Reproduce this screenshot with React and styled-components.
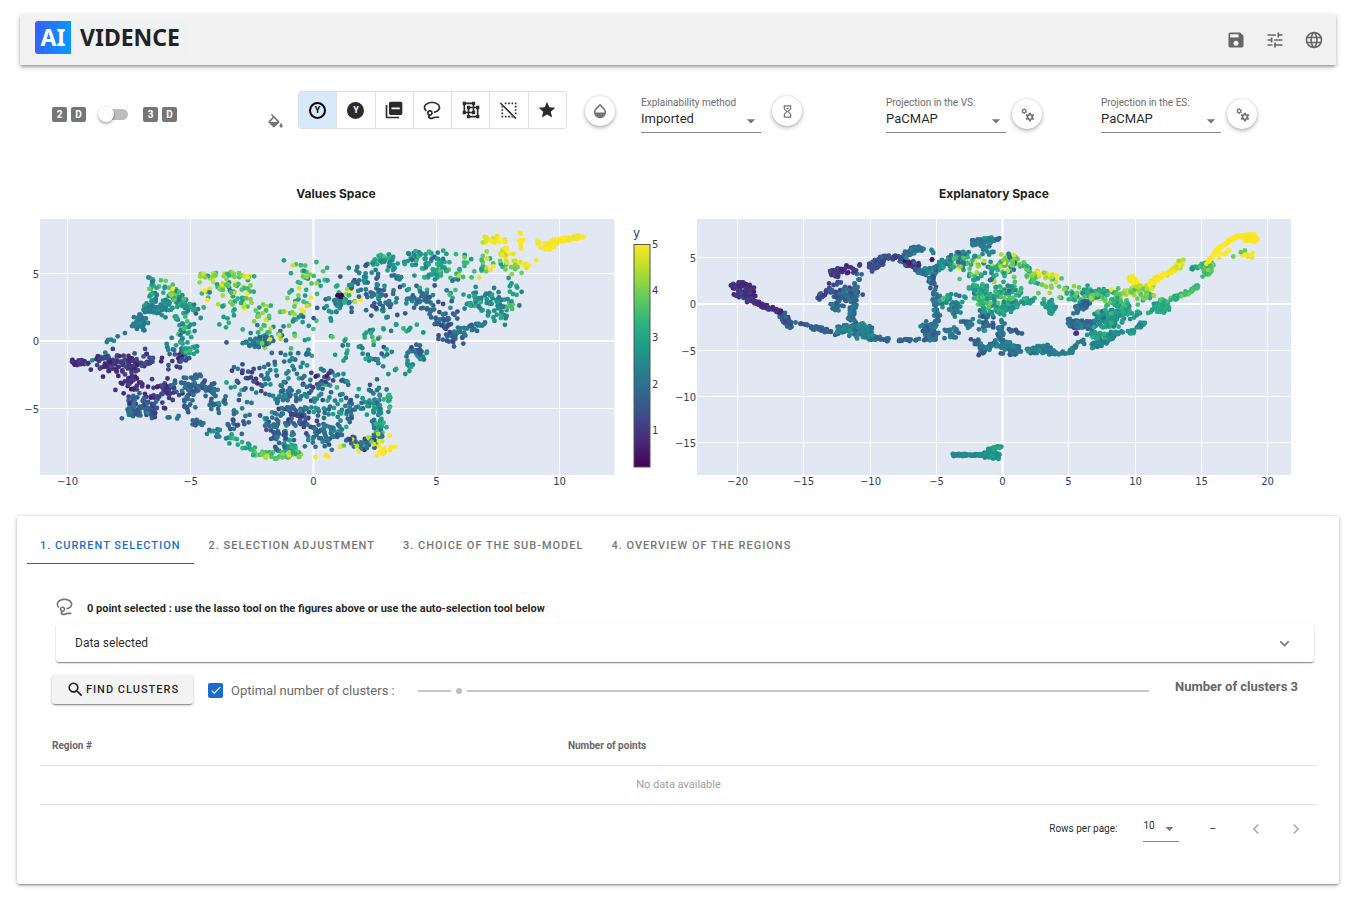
import React from "react";
import styled, { createGlobalStyle } from "styled-components";

const GlobalStyle = createGlobalStyle`
  *, *::before, *::after { box-sizing: border-box; }
  body {
    margin: 0;
    background: #fff;
    color: rgba(0, 0, 0, 0.87);
    font-family: Roboto, "Liberation Sans", sans-serif;
    font-size: 13px;
  }
  button, select, input { font: inherit; color: inherit; margin: 0; }
`;

/* ---------- icons ---------- */

const PATHS = {
  save: "M15,9H5V5H15M12,19A3,3 0 0,1 9,16A3,3 0 0,1 12,13A3,3 0 0,1 15,16A3,3 0 0,1 12,19M17,3H5C3.89,3 3,3.9 3,5V19A2,2 0 0,0 5,21H19A2,2 0 0,0 21,19V7L17,3Z",
  tune: "M3,17V19H9V17H3M3,5V7H13V5H3M13,21V19H21V17H13V15H11V21H13M7,9V11H3V13H7V15H9V9H7M21,13V11H11V13H21M15,9H17V7H21V5H17V3H15V9Z",
  web: "M16.36,14C16.44,13.34 16.5,12.68 16.5,12C16.5,11.32 16.44,10.66 16.36,10H19.74C19.9,10.64 20,11.31 20,12C20,12.69 19.9,13.36 19.74,14M14.59,19.56C15.19,18.45 15.65,17.25 15.97,16H18.92C17.96,17.65 16.43,18.93 14.59,19.56M14.34,14H9.66C9.56,13.34 9.5,12.68 9.5,12C9.5,11.32 9.56,10.65 9.66,10H14.34C14.43,10.65 14.5,11.32 14.5,12C14.5,12.68 14.43,13.34 14.34,14M12,19.96C11.17,18.76 10.5,17.43 10.09,16H13.91C13.5,17.43 12.83,18.76 12,19.96M8,8H5.08C6.03,6.34 7.57,5.06 9.4,4.44C8.8,5.55 8.35,6.75 8,8M5.08,16H8C8.35,17.25 8.8,18.45 9.4,19.56C7.57,18.93 6.03,17.65 5.08,16M4.26,14C4.1,13.36 4,12.69 4,12C4,11.31 4.1,10.64 4.26,10H7.64C7.56,10.66 7.5,11.32 7.5,12C7.5,12.68 7.56,13.34 7.64,14M12,4.03C12.83,5.23 13.5,6.57 13.91,8H10.09C10.5,6.57 11.17,5.23 12,4.03M18.92,8H15.97C15.65,6.75 15.19,5.55 14.59,4.44C16.43,5.07 17.96,6.34 18.92,8M12,2C6.47,2 2,6.5 2,12A10,10 0 0,0 12,22A10,10 0 0,0 22,12A10,10 0 0,0 12,2Z",
  fill: "M19,11.5C19,11.5 17,13.67 17,15A2,2 0 0,0 19,17A2,2 0 0,0 21,15C21,13.67 19,11.5 19,11.5M5.21,10L10,5.21L14.79,10M16.56,8.94L7.62,0L6.21,1.41L8.59,3.79L3.44,8.94C2.85,9.5 2.85,10.47 3.44,11.06L8.94,16.56C9.23,16.85 9.62,17 10,17C10.38,17 10.77,16.85 11.06,16.56L16.56,11.06C17.15,10.47 17.15,9.5 16.56,8.94Z",
  minusBoxes: "M4,6H2V20A2,2 0 0,0 4,22H18V20H4V6M20,2H8A2,2 0 0,0 6,4V16A2,2 0 0,0 8,18H20A2,2 0 0,0 22,16V4A2,2 0 0,0 20,2M19,11H9V9H19V11Z",
  lasso: "M12,2C17.5,2 22,5.13 22,9C22,12.26 18.81,15 14.5,15.78V15.5C14.5,14.91 14.4,14.34 14.21,13.81C17.55,13.21 20,11.28 20,9C20,6.24 16.42,4 12,4C7.58,4 4,6.24 4,9C4,10.19 4.67,11.29 5.79,12.15C5.35,12.64 5,13.21 4.78,13.85C3.06,12.59 2,10.88 2,9C2,5.13 6.5,2 12,2M9.5,12C11.43,12 13,13.57 13,15.5C13,17.4 11.5,18.95 9.6,19C9.39,19.36 9.18,20 9.83,20.68C11,21.88 13.28,19.72 16.39,19.71C18.43,19.7 20.03,19.74 20.03,19.74C20.03,19.74 21.08,19.85 20.97,20.84C20.86,21.82 19.91,21.71 19.91,21.71C19.53,21.71 18.03,21.58 16.22,21.71C14.41,21.85 13.61,22.92 12,23C10.4,23 7.9,22.9 7.22,21C6.77,19.6 7.4,18.4 7.4,18.3C6.54,17.7 6,16.66 6,15.5C6,13.57 7.57,12 9.5,12M9.5,14A1.5,1.5 0 0,0 8,15.5A1.5,1.5 0 0,0 9.5,17A1.5,1.5 0 0,0 11,15.5A1.5,1.5 0 0,0 9.5,14Z",
  overlap: "M2,2H6V3H13V2H17V6H16V8H18V7H22V11H21V18H22V22H18V21H11V22H7V18H8V16H6V17H2V13H3V6H2V2M13,5H6V6H5V13H6V14H8V11H7V7H11V8H14V6H13V5M11,10V11H10V14H13V13H14V10H11M16,10V13H17V17H13V16H10V18H11V19H18V18H19V11H18V10H16Z",
  selectOff: "M1,4.27L2.28,3L21,21.72L19.73,23L1,4.27M20,3A1,1 0 0,1 21,4V5H19V3H20M15,5V3H17V5H15M11,5V3H13V5H11M7,5V3H9V5H7M11,21V19H13V21H11M7,21V19H9V21H7M15,21V19H17V21H15M4,21A1,1 0 0,1 3,20V19H5V21H4M3,15H5V17H3V15M21,15V17H19V15H21M3,11H5V13H3V11M3,7H5V9H3V7M21,11V13H19V11H21M21,7V9H19V7H21Z",
  star: "M12,17.27L18.18,21L16.54,13.97L22,9.24L14.81,8.62L12,2L9.19,8.62L2,9.24L7.45,13.97L5.82,21L12,17.27Z",
  opacity: "M17.66,8L12,2.35L6.34,8C4.78,9.56 4,11.64 4,13.64C4,15.64 4.78,17.75 6.34,19.31C7.9,20.87 9.95,21.66 12,21.66C14.05,21.66 16.1,20.87 17.66,19.31C19.22,17.75 20,15.64 20,13.64C20,11.64 19.22,9.56 17.66,8M6,14C6,12 6.62,10.73 7.76,9.6L12,5.27L16.24,9.65C17.38,10.77 18,12 18,14H6Z",
  timer: "M6,2H18V8L14,12L18,16V22H6V16L10,12L6,8V2M16,16.5L12,12.5L8,16.5V20H16V16.5M12,11.5L16,7.5V4H8V7.5L12,11.5M10,6H14V6.75L12,8.75L10,6.75V6Z",
  cogs: "M15.9,18.45C17.25,18.45 18.35,17.35 18.35,16C18.35,14.65 17.25,13.55 15.9,13.55C14.54,13.55 13.45,14.65 13.45,16C13.45,17.35 14.54,18.45 15.9,18.45M21.1,16.68L22.58,17.84C22.71,17.95 22.75,18.13 22.66,18.29L21.26,20.71C21.17,20.86 21,20.92 20.83,20.86L19.09,20.16C18.73,20.44 18.33,20.67 17.91,20.85L17.64,22.7C17.62,22.87 17.47,23 17.3,23H14.5C14.32,23 14.18,22.87 14.15,22.7L13.89,20.85C13.46,20.67 13.07,20.44 12.71,20.16L10.96,20.86C10.81,20.92 10.62,20.86 10.54,20.71L9.14,18.29C9.05,18.13 9.09,17.95 9.22,17.84L10.7,16.68L10.65,16L10.7,15.31L9.22,14.16C9.09,14.05 9.05,13.86 9.14,13.71L10.54,11.29C10.62,11.13 10.81,11.07 10.96,11.13L12.71,11.84C13.07,11.56 13.46,11.32 13.89,11.15L14.15,9.29C14.18,9.13 14.32,9 14.5,9H17.3C17.47,9 17.62,9.13 17.64,9.29L17.91,11.15C18.33,11.32 18.73,11.56 19.09,11.84L20.83,11.13C21,11.07 21.17,11.13 21.26,11.29L22.66,13.71C22.75,13.86 22.71,14.05 22.58,14.16L21.1,15.31L21.15,16L21.1,16.68M6.69,8.07C7.56,8.07 8.26,7.37 8.26,6.5C8.26,5.63 7.56,4.92 6.69,4.92C5.82,4.92 5.12,5.63 5.12,6.5C5.12,7.37 5.82,8.07 6.69,8.07M10.03,6.94L11,7.68C11.07,7.75 11.09,7.87 11.03,7.97L10.13,9.53C10.08,9.63 9.96,9.67 9.86,9.63L8.74,9.18L8,9.62L7.81,10.81C7.79,10.92 7.7,11 7.59,11H5.79C5.67,11 5.58,10.92 5.56,10.81L5.4,9.62L4.64,9.18L3.52,9.63C3.41,9.67 3.3,9.63 3.24,9.53L2.34,7.97C2.28,7.87 2.31,7.75 2.39,7.68L3.34,6.94L3.31,6.5L3.34,6.06L2.39,5.32C2.31,5.25 2.28,5.13 2.34,5.03L3.24,3.47C3.3,3.37 3.41,3.33 3.52,3.37L4.63,3.82L5.4,3.38L5.56,2.19C5.58,2.08 5.67,2 5.79,2H7.59C7.7,2 7.79,2.08 7.81,2.19L8,3.38L8.74,3.82L9.86,3.37C9.96,3.33 10.08,3.37 10.13,3.47L11.03,5.03C11.09,5.13 11.07,5.25 11,5.32L10.03,6.06L10.06,6.5L10.03,6.94Z",
  magnify: "M9.5,3A6.5,6.5 0 0,1 16,9.5C16,11.11 15.41,12.59 14.44,13.73L14.71,14H15.5L20.5,19L19,20.5L14,15.5V14.71L13.73,14.44C12.59,15.41 11.11,16 9.5,16A6.5,6.5 0 0,1 3,9.5A6.5,6.5 0 0,1 9.5,3M9.5,5C7,5 5,7 5,9.5C5,12 7,14 9.5,14C12,14 14,12 14,9.5C14,7 12,5 9.5,5Z",
  down: "M7.41,8.58L12,13.17L16.59,8.58L18,10L12,16L6,10L7.41,8.58Z",
  left: "M15.41,16.58L10.83,12L15.41,7.41L14,6L8,12L14,18L15.41,16.58Z",
  right: "M8.59,16.58L13.17,12L8.59,7.41L10,6L16,12L10,18L8.59,16.58Z",
  caret: "M7,10L12,15L17,10H7Z",
  check: "M9,17L4,12L5.4,10.6L9,14.2L18.6,4.6L20,6L9,17Z",
};

const Glyph = styled.svg`
  display: block;
  flex: none;
  fill: currentColor;
  fill-rule: evenodd;
`;

const Icon = ({ name, size = 20 }) => (
  <Glyph width={size} height={size} viewBox="0 0 24 24" aria-hidden="true">
    <path d={PATHS[name]} />
  </Glyph>
);

/* ---------- header ---------- */

const Page = styled.div`
  padding: 14px 0 16px;
`;

const Header = styled.header`
  display: flex;
  align-items: center;
  justify-content: space-between;
  height: 51px;
  margin: 0 16px 0 20px;
  padding: 0 12px 0 15px;
  background: #f2f2f2;
  box-shadow: 0 2px 3px -1px rgba(0, 0, 0, 0.35), 0 2px 5px rgba(0, 0, 0, 0.22);
`;

const Logo = styled.div`
  display: flex;
  align-items: center;
  height: 33px;
  margin-bottom: 4px;
  padding-right: 8px;
  background: #f0f1f3;
  font: 700 23px/33px "Noto Sans", "Open Sans", sans-serif;
  color: #222;
`;

const LogoMark = styled.span`
  width: 36px;
  margin-right: 9px;
  border-radius: 3px 0 0 3px;
  background: linear-gradient(100deg, #3a5cff, #0a95ff 85%);
  color: #fff;
  text-align: center;
`;

const HeaderActions = styled.div`
  display: flex;
  gap: 19px;
  color: #666;
`;

const PlainButton = styled.button`
  display: grid;
  place-items: center;
  padding: 0;
  border: 0;
  background: none;
  cursor: pointer;
`;

/* ---------- toolbar ---------- */

const Toolbar = styled.div`
  display: grid;
  grid-template-columns: 216fr 376fr 245fr 215fr 251fr;
  align-items: start;
  height: 105px;
  padding: 26px 0 0 49px;
`;

const DimensionSwitch = styled.label`
  display: flex;
  align-items: center;
  height: 46px;
  padding-left: 3px;
`;

const Tiles = styled.span`
  display: flex;
  gap: 4px;
`;

const Tile = styled.span`
  width: 15px;
  height: 15px;
  border-radius: 2px;
  background: #757575;
  color: #fff;
  font: 700 10px/15px Roboto, sans-serif;
  text-align: center;
`;

const Toggle = styled.input`
  appearance: none;
  display: flex;
  align-items: center;
  width: 30px;
  height: 11px;
  margin: 0 15px 0 12px;
  border-radius: 6px;
  background: linear-gradient(to right, transparent 4px, #bdbdbd 4px);
  cursor: pointer;

  &::before {
    content: "";
    width: 16px;
    height: 16px;
    border-radius: 50%;
    background: #fff;
    box-shadow: 0 2px 3px rgba(0, 0, 0, 0.3), 0 0 2px rgba(0, 0, 0, 0.12);
  }
`;

const ToolGroup = styled.div`
  display: flex;
  align-items: flex-start;
`;

const FillMark = styled.span`
  margin: 23px 13px 0 1px;
  color: #757575;
`;

const ButtonBar = styled.div`
  display: flex;
  width: 269px;
  height: 38px;
  margin-right: 18px;
  border: 1px solid #e0e0e0;
  border-radius: 3px;
  overflow: hidden;
`;

const BarButton = styled.button`
  display: grid;
  place-items: center;
  flex: 1;
  padding: 0;
  border: 0;
  border-left: 1px solid #e0e0e0;
  background: ${(p) => (p.$active ? "#d7e9fa" : "#fff")};
  color: ${(p) => (p.$active ? "#000" : "#2b2b2b")};
  cursor: pointer;

  &:first-child { border-left: 0; }
`;

const Ring = styled.span`
  width: 17px;
  height: 17px;
  border: 2px solid ${(p) => (p.$solid ? "#2b2b2b" : "#000")};
  border-radius: 50%;
  background: ${(p) => (p.$solid ? "#2b2b2b" : "transparent")};
  color: ${(p) => (p.$solid ? "#fff" : "#000")};
  font: 700 9px/13px Roboto, sans-serif;
  text-align: center;
`;

const RoundButton = styled.button`
  display: grid;
  place-items: center;
  width: 30px;
  height: 30px;
  margin-top: ${(p) => (p.$low ? "8px" : "5px")};
  padding: 0;
  border: 0;
  border-radius: 50%;
  background: #fff;
  color: #757575;
  box-shadow: 0 2px 4px rgba(0, 0, 0, 0.28), 0 0 3px rgba(0, 0, 0, 0.12);
  cursor: pointer;
`;

const FieldGroup = styled.div`
  display: flex;
  align-items: flex-start;
  gap: ${(p) => (p.$tight ? "6px" : "11px")};
`;

const Field = styled.label`
  display: block;
  width: 120px;
  padding-top: 6px;
  color: #6b6b6b;
  font-size: 10px;
  line-height: 12px;
`;

const SelectBox = styled.span`
  display: grid;
  grid-template-columns: 1fr auto;
  align-items: center;
  height: ${(p) => (p.$small ? "27px" : "24px")};
  border-bottom: 1px solid #868686;
  color: #757575;
  width: ${(p) => (p.$small ? "36px" : "auto")};

  svg { grid-area: 1 / 2; pointer-events: none; }
`;

const Select = styled.select`
  grid-area: 1 / 1 / 2 / 3;
  appearance: none;
  width: 100%;
  padding: 0 0 4px;
  border: 0;
  background: none;
  color: rgba(0, 0, 0, 0.87);
  font-size: ${(p) => (p.$small ? "10px" : "13px")};
  line-height: 16px;
`;

/* ---------- charts ---------- */

const Charts = styled.section`
  display: grid;
  grid-template-columns: minmax(0, 670fr) minmax(0, 682fr);
`;

const Plot = styled.svg`
  display: block;
  width: 100%;
  height: auto;
`;

const Title = styled.text`
  font: 700 12px Inter, sans-serif;
  fill: #1f1f1f;
  text-anchor: middle;
`;

const Tick = styled.text`
  font: ${(p) => (p.$large ? "12px" : "10px")} "DejaVu Sans", sans-serif;
  fill: #2a3f5f;
  text-anchor: ${(p) => p.$anchor};
`;

const VIRIDIS = [
  [68, 1, 84], [72, 40, 120], [62, 73, 137], [49, 104, 142], [38, 130, 142],
  [31, 158, 137], [53, 183, 121], [109, 205, 89], [180, 222, 44], [253, 231, 37],
];

function viridis(value) {
  const t = Math.min(0.9999, Math.max(0, (value - 0.2) / 4.8)) * 9;
  const i = Math.floor(t);
  const f = t - i;
  const c = VIRIDIS[i].map((a, k) => Math.round(a + (VIRIDIS[i + 1][k] - a) * f));
  return `rgb(${c.join(",")})`;
}

/* Each swarm: count, mean value, value spread, radius, then the x, y pairs of its spine. */
const VALUE_SWARMS = [
  [60, 5, 0.1, 2, 583, 236, 566, 239, 546, 243], [20, 5, 0.1, 4, 555, 243, 546, 251],
  [24, 5, 0.4, 4, 484, 241, 505, 238], [9, 5, 0.1, 3, 520, 236, 523, 247],
  [14, 4.9, 0.3, 5, 502, 250, 512, 254], [10, 4.9, 0.3, 4, 508, 260, 525, 266, 538, 256],
  [4, 5, 0.1, 3, 533, 242, 545, 248], [20, 4, 0.8, 8, 482, 262, 500, 268],
  [10, 3.8, 0.4, 6, 508, 265, 522, 274], [30, 2.8, 0.6, 6, 374, 258, 396, 262],
  [45, 2.7, 0.6, 7, 410, 259, 445, 259], [24, 3.4, 0.7, 12, 450, 265, 475, 270],
  [24, 2.9, 0.5, 6, 425, 272, 445, 274], [22, 2, 0.5, 7, 347, 275, 390, 270],
  [24, 2.1, 0.5, 8, 352, 285, 375, 292, 400, 280], [34, 2.4, 0.6, 8, 328, 306, 350, 300],
  [6, 0.3, 0.2, 3, 337, 295, 342, 295], [5, 4.5, 0.4, 6, 345, 290, 356, 307],
  [32, 1.9, 0.5, 8, 370, 305, 395, 299], [6, 1.9, 0.4, 3, 394, 278, 402, 278],
  [34, 1.7, 0.3, 8, 414, 295, 433, 307], [36, 1.7, 0.4, 8, 434, 322, 458, 320],
  [24, 1.7, 0.3, 5, 430, 342, 462, 336], [20, 2, 0.3, 4, 455, 334, 488, 324],
  [56, 2.5, 0.4, 9, 478, 300, 508, 308], [12, 2.8, 0.4, 6, 464, 304, 478, 300],
  [12, 3.4, 0.5, 5, 500, 317, 512, 306], [8, 3, 0.4, 7, 508, 294, 514, 284],
  [12, 2.6, 0.7, 9, 455, 292, 475, 300], [26, 2, 0.5, 6, 408, 352, 424, 356],
  [10, 3, 0.4, 5, 401, 371, 410, 364], [12, 3, 0.5, 5, 366, 334, 382, 330],
  [12, 2.3, 0.7, 12, 395, 320, 414, 330], [20, 2.2, 0.6, 9, 362, 368, 380, 355, 396, 362],
  [9, 2, 0.4, 6, 372, 385, 382, 392], [54, 2.7, 0.5, 5, 376, 400, 379, 435],
  [22, 2.1, 0.4, 7, 348, 405, 368, 402], [14, 3, 0.5, 2, 384, 400, 390, 396, 390, 428],
  [14, 4, 0.7, 5, 373, 442, 388, 434], [12, 5, 0.2, 4, 376, 454, 392, 448],
  [40, 1.8, 0.6, 5, 330, 432, 345, 438, 360, 444, 374, 444], [8, 4.5, 0.6, 6, 338, 440, 360, 446],
  [60, 2, 0.6, 24, 262, 390, 290, 410, 315, 425], [46, 1.9, 0.3, 7, 278, 392, 292, 404, 296, 414],
  [44, 1.8, 0.3, 7, 268, 425, 285, 440], [26, 1.2, 0.3, 6, 282, 416, 310, 424],
  [36, 2, 0.4, 8, 312, 438, 332, 430], [28, 1.4, 0.5, 8, 308, 386, 336, 378],
  [34, 2.2, 0.5, 10, 305, 400, 330, 395, 345, 408], [20, 1.3, 0.4, 9, 240, 375, 268, 378],
  [24, 2, 0.4, 12, 270, 372, 300, 370], [12, 1.9, 0.3, 3, 192, 422, 206, 425],
  [14, 2.3, 0.4, 4, 206, 430, 236, 438], [15, 3.2, 0.4, 4, 228, 440, 255, 450],
  [55, 3.8, 0.5, 3, 252, 453, 275, 456, 300, 454], [14, 3, 0.4, 5, 286, 447, 300, 442],
  [4, 5, 0.1, 4, 316, 458, 330, 456], [16, 1.7, 0.4, 6, 228, 426, 245, 418],
  [20, 0.8, 0.2, 3, 72, 363, 88, 362], [54, 0.9, 0.3, 6, 98, 366, 114, 359, 140, 362],
  [34, 0.9, 0.2, 6, 105, 370, 140, 367], [30, 0.9, 0.3, 7, 125, 382, 142, 382],
  [18, 1.1, 0.3, 6, 138, 361, 150, 359], [40, 1, 0.3, 7, 148, 394, 170, 388],
  [26, 1.5, 0.4, 6, 128, 398, 150, 408], [28, 1.4, 0.4, 6, 148, 405, 156, 412],
  [34, 1.9, 0.4, 5, 128, 414, 145, 410], [9, 2.6, 0.4, 7, 90, 360, 112, 354],
  [54, 1.7, 0.3, 5, 172, 386, 192, 386, 214, 388], [16, 1.8, 0.3, 5, 184, 396, 189, 410],
  [30, 1.9, 0.3, 5, 208, 388, 212, 398, 220, 404], [8, 1.9, 0.3, 3, 190, 378, 200, 376],
  [20, 1.1, 0.4, 6, 168, 364, 188, 358], [4, 1.9, 0.2, 3, 170, 416, 178, 418],
  [52, 2.4, 0.3, 6, 150, 308, 168, 305], [34, 2.2, 0.2, 5, 134, 323, 143, 323],
  [14, 2.2, 0.2, 4, 142, 317, 150, 308], [18, 3, 0.6, 3, 151, 278, 153, 298],
  [26, 3.6, 0.8, 6, 158, 284, 176, 296], [32, 2.7, 0.5, 7, 170, 300, 190, 312],
  [26, 2.8, 0.6, 6, 182, 318, 186, 345], [12, 2.2, 0.6, 7, 168, 344, 180, 356],
  [14, 2.8, 0.5, 4, 184, 350, 195, 350], [22, 2.6, 0.6, 8, 186, 295, 198, 314],
  [34, 4, 0.8, 3, 202, 276, 225, 275, 250, 275], [44, 3.9, 0.9, 9, 206, 291, 235, 288],
  [20, 3.6, 0.9, 10, 240, 284, 253, 305], [26, 3.8, 0.9, 10, 250, 305, 272, 318],
  [10, 3, 0.7, 14, 208, 312, 226, 315], [26, 3.4, 1.1, 8, 250, 342, 280, 332],
  [32, 2, 0.5, 5, 245, 345, 272, 340], [26, 3.7, 0.8, 13, 286, 280, 320, 274],
  [24, 3.4, 0.9, 14, 284, 305, 322, 302], [16, 2.7, 0.8, 12, 284, 336, 308, 325],
  [10, 3.2, 0.7, 8, 320, 264, 338, 285], [8, 1.9, 0.7, 14, 225, 358, 320, 355],
  [5, 2, 0.4, 6, 104, 342, 126, 336], [14, 2.7, 0.7, 12, 335, 350, 360, 355],
  [22, 2.2, 0.7, 14, 290, 355, 330, 370, 350, 395], [12, 2.4, 0.7, 14, 225, 390, 250, 400],
  [14, 2.6, 0.6, 12, 310, 405, 345, 420], [16, 2.4, 0.7, 14, 400, 290, 450, 290],
];

const EXPLANATION_SWARMS = [
  [45, 0.8, 0.2, 3, 731, 288, 741, 284, 750, 288], [36, 0.8, 0.2, 4, 737, 295, 752, 290],
  [20, 0.8, 0.2, 3, 744, 299, 756, 299], [46, 0.9, 0.2, 2, 752, 300, 766, 307, 781, 312],
  [40, 1.6, 0.2, 4, 782, 315, 792, 327], [10, 1.6, 0.3, 1, 795, 322, 812, 327],
  [28, 1.7, 0.2, 2, 812, 327, 830, 332], [26, 2.3, 0.3, 4, 835, 331, 848, 328],
  [90, 2.2, 0.3, 5, 850, 330, 861, 328, 868, 336], [26, 1.9, 0.2, 2, 865, 337, 889, 340],
  [14, 1.7, 0.2, 1, 898, 340, 912, 340], [8, 1.7, 0.2, 1, 914, 340, 935, 340],
  [26, 0.9, 0.2, 4, 832, 273, 850, 269], [5, 0.9, 0.2, 3, 854, 270, 859, 265],
  [6, 1, 0.3, 4, 832, 285, 842, 276], [16, 1.4, 0.4, 3, 818, 297, 832, 290],
  [60, 1.6, 0.4, 8, 835, 293, 850, 298, 850, 288], [56, 1.9, 0.2, 3, 855, 285, 854, 305, 850, 320],
  [14, 1.8, 0.3, 4, 830, 305, 842, 308], [6, 1.9, 0.3, 3, 856, 282, 860, 273],
  [8, 1.9, 0.3, 3, 852, 320, 855, 326], [48, 1.4, 0.3, 4, 870, 268, 886, 258],
  [32, 1.3, 0.3, 2, 882, 257, 905, 258], [42, 2, 0.3, 3, 903, 257, 911, 251, 922, 248],
  [30, 1.6, 0.5, 4, 902, 260, 922, 270], [10, 0.7, 0.2, 3, 905, 262, 921, 265],
  [20, 2.1, 0.3, 4, 918, 272, 935, 272], [22, 2.5, 0.4, 4, 933, 270, 948, 262],
  [3, 2.4, 0.2, 2, 931, 252, 932, 253], [2, 0.4, 0.1, 1, 931, 259, 932, 260],
  [16, 1.8, 0.4, 3, 931, 276, 934, 292], [60, 2, 0.3, 3, 934, 294, 937, 312, 935, 330, 932, 340],
  [46, 2, 0.3, 5, 928, 325, 932, 338], [54, 2.2, 0.4, 3, 973, 243, 984, 241, 998, 240],
  [12, 2.1, 0.3, 5, 980, 246, 990, 252], [46, 2.5, 0.6, 7, 945, 262, 975, 255],
  [26, 3.6, 0.9, 8, 950, 265, 982, 263], [62, 2.8, 0.7, 12, 968, 280, 992, 300, 996, 262],
  [40, 3.2, 0.4, 5, 976, 285, 985, 303], [34, 2.4, 0.4, 6, 948, 300, 954, 315, 960, 296],
  [16, 3, 0.4, 4, 940, 305, 950, 295], [54, 2.9, 0.6, 10, 985, 305, 1000, 308, 1003, 295],
  [16, 2, 0.3, 6, 946, 333, 958, 333], [14, 2, 0.3, 4, 964, 326, 972, 322],
  [26, 2, 0.6, 8, 975, 325, 992, 322], [56, 2.1, 0.3, 3, 1002, 322, 999, 342, 985, 350],
  [22, 1.8, 0.3, 3, 973, 341, 984, 345, 980, 354], [54, 2.2, 0.2, 4, 1002, 344, 1018, 350],
  [60, 2.2, 0.3, 4, 1029, 350, 1050, 349], [26, 2.3, 0.2, 2, 1050, 353, 1070, 353, 1076, 345],
  [8, 1.7, 0.2, 1, 1000, 354, 1018, 354], [8, 1.7, 0.2, 2, 1010, 330, 1022, 333],
  [34, 3, 0.9, 9, 995, 272, 1010, 264], [26, 4, 0.7, 4, 1003, 256, 1022, 262],
  [26, 3.6, 0.5, 4, 1022, 265, 1035, 282], [8, 5, 0.1, 4, 998, 260, 1018, 262],
  [26, 4.4, 0.5, 3, 1035, 274, 1060, 278], [20, 3.8, 0.6, 7, 1035, 287, 1070, 290],
  [26, 3.2, 0.7, 8, 1005, 288, 1018, 296], [40, 2.9, 0.4, 4, 1000, 310, 1018, 303],
  [16, 2.8, 0.4, 3, 1022, 302, 1035, 301], [36, 2.8, 0.3, 4, 1042, 303, 1053, 304, 1050, 312],
  [42, 3.2, 0.6, 5, 1063, 298, 1090, 294, 1112, 292], [54, 3.6, 0.5, 5, 1080, 292, 1112, 298, 1125, 305],
  [46, 3, 0.4, 7, 1100, 307, 1142, 312], [76, 2.7, 0.4, 8, 1097, 320, 1118, 318],
  [34, 1.9, 0.4, 4, 1075, 310, 1090, 303], [80, 1.9, 0.3, 4, 1070, 323, 1092, 326],
  [3, 0.8, 0.2, 1, 1074, 334, 1077, 333], [60, 2.4, 0.2, 3, 1092, 347, 1105, 341, 1115, 332],
  [26, 2.5, 0.3, 2, 1112, 334, 1136, 331, 1145, 320], [5, 2.2, 0.2, 3, 1076, 341, 1085, 341],
  [24, 2.7, 0.3, 4, 1090, 335, 1110, 338], [50, 3.1, 0.3, 5, 1156, 308, 1168, 308],
  [14, 3.2, 0.3, 4, 1161, 302, 1165, 305], [44, 3.5, 0.3, 2, 1172, 299, 1190, 292, 1200, 284],
  [34, 3.6, 0.4, 4, 1205, 276, 1210, 266, 1203, 266], [44, 4.4, 0.5, 4, 1125, 292, 1155, 285],
  [36, 5, 0.2, 2, 1150, 283, 1160, 277, 1175, 270], [26, 4.8, 0.3, 3, 1174, 271, 1182, 261],
  [10, 3, 0.6, 2, 1184, 270, 1202, 267], [12, 5, 0.1, 3, 1131, 278, 1136, 282],
  [30, 4, 0.6, 5, 1112, 292, 1152, 296], [100, 5, 0.05, 1, 1207, 263, 1220, 247, 1237, 236, 1256, 235],
  [60, 5, 0.05, 3, 1246, 238, 1256, 240], [5, 5, 0.1, 3, 1212, 260, 1232, 248],
  [12, 4.9, 0.3, 2, 1240, 256, 1254, 255], [3, 3.9, 0.2, 1, 1233, 257, 1248, 248],
  [50, 2.5, 0.1, 1, 952, 455, 982, 455], [56, 2.6, 0.2, 3, 982, 455, 998, 456],
  [26, 2.9, 0.2, 1, 988, 450, 1002, 446],
];

/* Strays are dots that land outside their swarm's radius. */
function scatter(swarms, seed, strays) {
  let s = seed;
  const rand = () => {
    s = (s * 1664525 + 1013904223) % 4294967296;
    return s / 4294967296;
  };
  const dots = [];
  swarms.forEach(([count, mean, spread, radius, ...spine]) => {
    const segments = spine.length / 2 - 1;
    for (let i = 0; i < count; i += 1) {
      const along = rand() * segments;
      const k = Math.min(segments - 1, Math.floor(along)) * 2;
      const f = along - k / 2;
      const angle = rand() * Math.PI * 2;
      const reach = rand() < strays && radius > 4 ? 2 : 1.1;
      const r = Math.sqrt(rand()) * radius * reach;
      dots.push({
        x: Math.round((spine[k] + (spine[k + 2] - spine[k]) * f + Math.cos(angle) * r) * 10) / 10,
        y: Math.round((spine[k + 1] + (spine[k + 3] - spine[k + 1]) * f + Math.sin(angle) * r) * 10) / 10,
        color: viridis(mean + (rand() + rand() - 1) * spread * 2),
        order: rand(),
      });
    }
  });
  return dots.sort((a, b) => a.order - b.order);
}

const VALUE_DOTS = scatter(VALUE_SWARMS, 7, 0.4);
const EXPLANATION_DOTS = scatter(EXPLANATION_SWARMS, 11, 0.12);

const label = (n) => String(n).replace("-", "−");

function ScatterPlot({ title, viewBox, titleX, area, xTicks, yTicks, dots, children }) {
  const [x0, x1] = area;
  return (
    <Plot viewBox={viewBox} role="img" aria-label={title}>
      <Title x={titleX} y={198}>{title}</Title>
      <rect x={x0} y={219} width={x1 - x0} height={256} fill="#e1e8f4" />
      {xTicks.map(([n, x]) => (
        <g key={n}>
          <path d={`M${x} 219V475`} stroke="#fff" strokeWidth={n === 0 ? 2 : 1} />
          <Tick x={x} y={485} $anchor="middle">{label(n)}</Tick>
        </g>
      ))}
      {yTicks.map(([n, y]) => (
        <g key={n}>
          <path d={`M${x0} ${y}H${x1}`} stroke="#fff" strokeWidth={n === 0 ? 2 : 1} />
          <Tick x={x0 - 1} y={y + 4} $anchor="end">{label(n)}</Tick>
        </g>
      ))}
      {dots.map((d, i) => (
        <circle key={i} cx={d.x} cy={d.y} r="2.4" fill={d.color} />
      ))}
      {children}
    </Plot>
  );
}

const ColorScale = () => (
  <g>
    <defs>
      <linearGradient id="scale" x1="0" y1="1" x2="0" y2="0">
        {VIRIDIS.map((c, i) => (
          <stop key={i} offset={i / 9} stopColor={`rgb(${c.join(",")})`} />
        ))}
      </linearGradient>
    </defs>
    <Tick x={633} y={237} $large $anchor="start">y</Tick>
    <rect x="634" y="244.5" width="16" height="222.5" fill="url(#scale)" stroke="#555" strokeWidth="1" />
    {[[5, 248], [4, 294], [3, 341], [2, 388], [1, 434]].map(([n, y]) => (
      <Tick key={n} x={652} y={y} $anchor="start">{n}</Tick>
    ))}
  </g>
);

/* ---------- selection panel ---------- */

const Panel = styled.main`
  margin: 0 13px 0 17px;
  padding: 10px 22px 31px 10px;
  border-radius: 3px;
  background: #fff;
  box-shadow: 0 2px 2px -1px rgba(0, 0, 0, 0.3), 0 1px 4px rgba(0, 0, 0, 0.3);
`;

const Tabs = styled.div`
  display: flex;
  gap: 2px;
`;

const Tab = styled.button`
  height: 38px;
  padding: 2px 13px 0;
  border: 0;
  border-bottom: 1px solid ${(p) => (p.$active ? "#1668c7" : "transparent")};
  background: none;
  color: ${(p) => (p.$active ? "#1a6fd0" : "#757575")};
  font-size: 11px;
  font-weight: 500;
  letter-spacing: 1px;
  text-transform: uppercase;
  white-space: nowrap;
  cursor: pointer;
`;

const Status = styled.p`
  display: flex;
  align-items: center;
  gap: 13px;
  height: 20px;
  margin: 32px 0 0 28px;
  font-size: 11px;
  font-weight: 700;
  line-height: 20px;

  svg { color: #757575; }
  span { padding-top: 5px; }
`;

const Accordion = styled.button`
  display: flex;
  align-items: center;
  justify-content: space-between;
  width: calc(100% - 32px);
  height: 38px;
  margin: 8px 3px 0 29px;
  padding: 0 20px 0 19px;
  border: 0;
  border-radius: 3px;
  background: #fff;
  font-size: 12px;
  box-shadow: 0 2px 1px -1px rgba(0, 0, 0, 0.3), 0 1px 2px rgba(0, 0, 0, 0.28);
  cursor: pointer;

  svg { color: #757575; }
`;

const ClusterRow = styled.div`
  display: flex;
  align-items: center;
  margin: 13px 19px 0 25px;
  height: 29px;
`;

const FindButton = styled.button`
  display: flex;
  align-items: center;
  justify-content: center;
  gap: 1px;
  width: 141px;
  height: 29px;
  padding: 0;
  border: 0;
  border-radius: 3px;
  background: #f3f3f3;
  font-size: 11px;
  font-weight: 500;
  letter-spacing: 1px;
  box-shadow: 0 2px 1px -1px rgba(0, 0, 0, 0.3), 0 1px 3px rgba(0, 0, 0, 0.3);
  cursor: pointer;
`;

const CheckLabel = styled.label`
  display: flex;
  align-items: center;
  gap: 8px;
  margin: 2px 23px 0 15px;
  color: #6b6b6b;
  font-size: 13px;
`;

const CheckBox = styled.span`
  display: grid;
  place-items: center;
  width: 15px;
  height: 15px;
  border-radius: 2px;
  background: #1a6bd0;
  color: #fff;

  > * { grid-area: 1 / 1; }
  input { appearance: none; width: 15px; height: 15px; }
  svg { pointer-events: none; }
`;

const Slider = styled.input`
  appearance: none;
  flex: 1;
  min-width: 0;
  height: 14px;
  margin-top: 2px;
  background: none;

  &::-webkit-slider-runnable-track {
    height: 2px;
    background: #c8c8c8;
  }
  &::-webkit-slider-thumb {
    appearance: none;
    width: 6px;
    height: 6px;
    margin-top: -2px;
    border-radius: 50%;
    background: #bdbdbd;
    box-shadow: 0 0 0 5px #fff;
  }
`;

const ClusterCount = styled.output`
  margin: 0 0 6px 26px;
  color: #666;
  font-size: 13px;
  font-weight: 700;
  line-height: 16px;
`;

const Table = styled.table`
  width: calc(100% - 13px);
  margin: 22px 0 0 13px;
  border-collapse: collapse;
  table-layout: fixed;
  font-size: 11px;

  th, td {
    height: 39px;
    padding: 0 12px;
    border-bottom: 1px solid #e0e0e0;
  }
  th {
    color: #666;
    font-size: 10px;
    font-weight: 700;
    text-align: left;
  }
  th:first-child { width: 40.4%; }
  td { color: #9e9e9e; text-align: center; }
`;

const Footer = styled.div`
  display: flex;
  align-items: center;
  justify-content: flex-end;
  height: 48px;
  padding-right: 11px;
  font-size: 10px;
`;

const RowsLabel = styled.label`
  display: flex;
  align-items: center;
  gap: 26px;
`;

const Range = styled.span`
  margin: 0 30px;
`;

const Pager = styled.div`
  display: flex;
  gap: 20px;
  color: #b0b0b0;
`;

const TOOLS = [
  ["Values outline", null],
  ["Values filled", null],
  ["Remove", "minusBoxes"],
  ["Lasso", "lasso"],
  ["Overlap", "overlap"],
  ["Clear selection", "selectOff"],
  ["Favourite", "star"],
];

const TABS = [
  "1. Current selection",
  "2. Selection adjustment",
  "3. Choice of the sub-model",
  "4. Overview of the regions",
];

const LabeledSelect = ({ text, value }) => (
  <Field>
    {text}
    <SelectBox>
      <Select defaultValue={value}>
        <option>{value}</option>
      </Select>
      <Icon name="caret" size={20} />
    </SelectBox>
  </Field>
);

export default function App() {
  return (
    <Page>
      <GlobalStyle />
      <Header>
        <Logo><LogoMark>AI</LogoMark>VIDENCE</Logo>
        <HeaderActions>
          <PlainButton aria-label="Save"><Icon name="save" /></PlainButton>
          <PlainButton aria-label="Settings"><Icon name="tune" /></PlainButton>
          <PlainButton aria-label="Language"><Icon name="web" /></PlainButton>
        </HeaderActions>
      </Header>

      <Toolbar>
        <DimensionSwitch>
          <Tiles><Tile>2</Tile><Tile>D</Tile></Tiles>
          <Toggle type="checkbox" role="switch" />
          <Tiles><Tile>3</Tile><Tile>D</Tile></Tiles>
        </DimensionSwitch>

        <ToolGroup>
          <FillMark><Icon name="fill" size={19} /></FillMark>
          <ButtonBar>
            {TOOLS.map(([name, icon], i) => (
              <BarButton key={name} $active={i === 0} aria-label={name}>
                {icon ? <Icon name={icon} /> : <Ring $solid={i === 1}>Y</Ring>}
              </BarButton>
            ))}
          </ButtonBar>
          <RoundButton aria-label="Opacity"><Icon name="opacity" size={18} /></RoundButton>
        </ToolGroup>

        <FieldGroup>
          <LabeledSelect text="Explainability method" value="Imported" />
          <RoundButton aria-label="Compute"><Icon name="timer" size={15} /></RoundButton>
        </FieldGroup>
        <FieldGroup $tight>
          <LabeledSelect text="Projection in the VS:" value="PaCMAP" />
          <RoundButton $low aria-label="VS settings"><Icon name="cogs" size={15} /></RoundButton>
        </FieldGroup>
        <FieldGroup $tight>
          <LabeledSelect text="Projection in the ES:" value="PaCMAP" />
          <RoundButton $low aria-label="ES settings"><Icon name="cogs" size={15} /></RoundButton>
        </FieldGroup>
      </Toolbar>

      <Charts>
        <ScatterPlot
          title="Values Space"
          viewBox="0 170 670 346"
          titleX={336}
          area={[40, 614.5]}
          xTicks={[[-10, 67.5], [-5, 190.5], [0, 313.5], [5, 436.5], [10, 559.5]]}
          yTicks={[[5, 273.5], [0, 341], [-5, 408.5]]}
          dots={VALUE_DOTS}
        >
          <ColorScale />
        </ScatterPlot>
        <ScatterPlot
          title="Explanatory Space"
          viewBox="670 170 682 346"
          titleX={994}
          area={[697, 1291]}
          xTicks={[[-20, 737.5], [-15, 803.5], [-10, 870.5], [-5, 936.5], [0, 1002.5], [5, 1068.5], [10, 1135.5], [15, 1201.5], [20, 1267.5]]}
          yTicks={[[5, 257.5], [0, 304], [-5, 350.5], [-10, 396.5], [-15, 442.5]]}
          dots={EXPLANATION_DOTS}
        />
      </Charts>

      <Panel>
        <Tabs role="tablist">
          {TABS.map((name, i) => (
            <Tab key={name} role="tab" aria-selected={i === 0} $active={i === 0}>{name}</Tab>
          ))}
        </Tabs>
        <Status>
          <Icon name="lasso" size={19} />
          <span>0 point selected : use the lasso tool on the figures above or use the auto-selection tool below</span>
        </Status>
        <Accordion aria-expanded="false">
          Data selected
          <Icon name="down" size={19} />
        </Accordion>
        <ClusterRow>
          <FindButton><Icon name="magnify" size={19} />FIND CLUSTERS</FindButton>
          <CheckLabel>
            <CheckBox>
              <input type="checkbox" defaultChecked />
              <Icon name="check" size={14} />
            </CheckBox>
            Optimal number of clusters :
          </CheckLabel>
          <Slider type="range" min="2" max="21" defaultValue="3" aria-label="Number of clusters" />
          <ClusterCount>Number of clusters 3</ClusterCount>
        </ClusterRow>
        <Table>
          <thead>
            <tr><th>Region #</th><th>Number of points</th></tr>
          </thead>
          <tbody>
            <tr><td colSpan={2}>No data available</td></tr>
          </tbody>
        </Table>
        <Footer>
          <RowsLabel>
            Rows per page:
            <SelectBox $small>
              <Select $small defaultValue="10"><option>10</option></Select>
              <Icon name="caret" size={19} />
            </SelectBox>
          </RowsLabel>
          <Range>–</Range>
          <Pager>
            <PlainButton aria-label="Previous page"><Icon name="left" size={20} /></PlainButton>
            <PlainButton aria-label="Next page"><Icon name="right" size={20} /></PlainButton>
          </Pager>
        </Footer>
      </Panel>
    </Page>
  );
}
